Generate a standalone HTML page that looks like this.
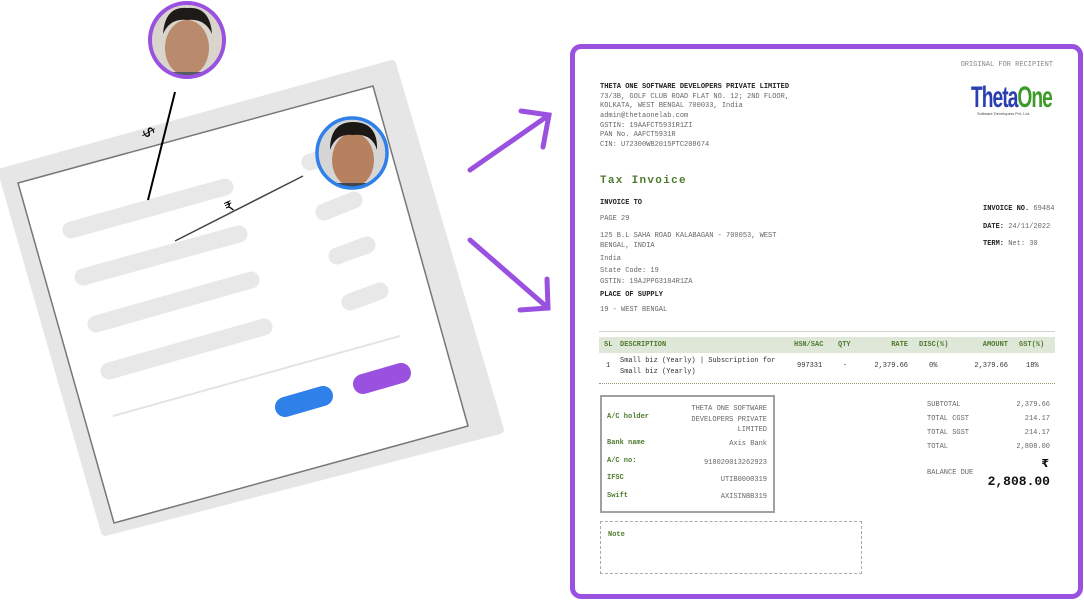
<!DOCTYPE html>
<html><head><meta charset="utf-8"><style>
*{margin:0;padding:0;box-sizing:border-box}
body{width:1084px;height:600px;background:#fff;position:relative;overflow:hidden;font-family:"Liberation Mono",monospace;color:#555}
.t{position:absolute;font-size:7px;line-height:9px;white-space:nowrap;color:#666}
.b{font-weight:bold;color:#222}
.g{color:#4f7a2e;font-weight:bold}
.r{text-align:right}
</style></head><body>
<svg width="560" height="600" style="position:absolute;left:0;top:0">
<defs>
<clipPath id="c1"><circle cx="187" cy="40" r="36"/></clipPath>
<clipPath id="c2"><circle cx="352" cy="153" r="34"/></clipPath>
</defs>
<polygon points="2,172 392,64 500,430 105,532" fill="#e6e6e6" stroke="#e6e6e6" stroke-width="8" stroke-linejoin="round"/>
<polygon points="18,183 373,86 468,426 114,523" fill="#fff" stroke="#777" stroke-width="1.5"/>
<g stroke="#e8e8e8" stroke-width="17" stroke-linecap="round">
<line x1="71" y1="230" x2="225" y2="187"/>
<line x1="83" y1="277" x2="239" y2="234"/>
<line x1="96" y1="324" x2="251" y2="280"/>
<line x1="109" y1="371" x2="264" y2="327"/>
<line x1="310" y1="162" x2="320" y2="159"/>
<line x1="324" y1="212" x2="354" y2="200"/>
<line x1="337" y1="256" x2="367" y2="245"/>
<line x1="350" y1="302" x2="380" y2="291"/>
</g>
<line x1="113" y1="416" x2="400" y2="336" stroke="#e4e4e4" stroke-width="2"/>
<line x1="285" y1="407" x2="323" y2="396" stroke="#2f80e8" stroke-width="20" stroke-linecap="round"/>
<line x1="363" y1="384" x2="401" y2="373" stroke="#9b51e0" stroke-width="20" stroke-linecap="round"/>
<line x1="175" y1="92" x2="148" y2="200" stroke="#000" stroke-width="2"/>
<text x="142" y="142" font-size="16" font-family="DejaVu Sans" transform="rotate(60 152 136)">$</text>
<line x1="175" y1="241" x2="303" y2="176" stroke="#444" stroke-width="1.5"/>
<text x="224" y="210" font-size="14" font-family="DejaVu Sans" transform="rotate(-25 232 204)">₹</text>
<g clip-path="url(#c1)"><rect x="140" y="0" width="100" height="80" fill="#d9d4cc"/><ellipse cx="187" cy="48" rx="22" ry="28" fill="#b98a6c"/><path d="M163 34 Q165 6 187 8 Q210 6 212 34 Q205 18 187 20 Q170 18 163 34Z" fill="#1e1a18"/><rect x="160" y="72" width="55" height="10" fill="#555c66"/></g>
<circle cx="187" cy="40" r="37" fill="none" stroke="#9b51e0" stroke-width="4"/>
<g clip-path="url(#c2)"><rect x="310" y="115" width="90" height="80" fill="#d6d6d6"/><ellipse cx="353" cy="160" rx="21" ry="27" fill="#b7805e"/><path d="M330 150 Q330 122 353 122 Q378 122 377 150 Q372 133 353 135 Q336 133 330 150Z" fill="#1c1815"/><rect x="325" y="183" width="56" height="10" fill="#3f4650"/></g>
<circle cx="352" cy="153" r="35" fill="none" stroke="#2f80e8" stroke-width="3.5"/>
<g stroke="#9b51e0" stroke-width="5" stroke-linecap="round" fill="none">
<line x1="470" y1="170" x2="549" y2="115"/><polyline points="521,111 549,115 543,147"/>
<line x1="470" y1="240" x2="548" y2="308"/><polyline points="547,279 548,308 520,310"/>
</g>
</svg>
<div style="position:absolute;left:570px;top:44px;width:513px;height:555px;border:5px solid #9b51e0;border-radius:11px"></div>
<div class="t r" style="right:31px;top:61px;color:#888">ORIGINAL FOR RECIPIENT</div>
<div class="t b" style="left:600px;top:83px">THETA ONE SOFTWARE DEVELOPERS PRIVATE LIMITED</div>
<div class="t" style="left:600px;top:92.5px;line-height:9.7px">73/3B, GOLF CLUB ROAD FLAT NO. 12; 2ND FLOOR,<br>KOLKATA, WEST BENGAL 700033, India<br>admin@thetaonelab.com<br>GSTIN: 19AAFCT5931R1ZI<br>PAN No. AAFCT5931R<br>CIN: U72300WB2015PTC208674</div>
<div style="position:absolute;left:971px;top:82px;font-family:'Liberation Sans',sans-serif;font-weight:bold;font-size:30px;letter-spacing:-1.5px;transform:scaleX(0.64);transform-origin:left top;line-height:32px"><span style="color:#2a3fae">Theta</span><span style="color:#3f9a2a">One</span></div>
<div style="position:absolute;left:977px;top:111px;font-family:'Liberation Sans',sans-serif;font-size:4px;color:#444">Software Developers Pvt. Ltd.</div>
<div style="position:absolute;left:600px;top:175px;font-size:11px;font-weight:bold;color:#4f7a2e;letter-spacing:1.3px">Tax Invoice</div>
<div class="t b" style="left:600px;top:199px">INVOICE TO</div>
<div class="t" style="left:600px;top:215px">PAGE 29</div>
<div class="t" style="left:600px;top:231px;line-height:10px">125 B.L SAHA ROAD KALABAGAN - 700053, WEST<br>BENGAL, INDIA</div>
<div class="t" style="left:600px;top:255px">India</div>
<div class="t" style="left:600px;top:267px">State Code: 19</div>
<div class="t" style="left:600px;top:278px">GSTIN: 19AJPPG3184R1ZA</div>
<div class="t b" style="left:600px;top:291px">PLACE OF SUPPLY</div>
<div class="t" style="left:600px;top:306px">19 - WEST BENGAL</div>
<div class="t" style="left:983px;top:205px"><b style="color:#222">INVOICE NO.</b> 69484</div>
<div class="t" style="left:983px;top:223px"><b style="color:#222">DATE:</b> 24/11/2022</div>
<div class="t" style="left:983px;top:240px"><b style="color:#222">TERM:</b> Net: 30</div>
<div style="position:absolute;left:599px;top:331px;width:456px;height:1px;background:#cfd8c8"></div>
<div style="position:absolute;left:599px;top:337px;width:456px;height:16px;background:#dfe8d8"></div>
<div class="t g" style="left:604px;top:341px">SL</div>
<div class="t g" style="left:620px;top:341px">DESCRIPTION</div>
<div class="t g" style="left:794px;top:341px">HSN/SAC</div>
<div class="t g" style="left:838px;top:341px">QTY</div>
<div class="t g r" style="right:176px;top:341px">RATE</div>
<div class="t g" style="left:919px;top:341px">DISC(%)</div>
<div class="t g r" style="right:76px;top:341px">AMOUNT</div>
<div class="t g" style="left:1019px;top:341px">GST(%)</div>
<div class="t" style="left:606px;top:362px;color:#333">1</div>
<div class="t" style="left:620px;top:356px;line-height:10.5px;color:#333">Small biz (Yearly) | Subscription for<br>Small biz (Yearly)</div>
<div class="t" style="left:797px;top:362px;color:#333">997331</div>
<div class="t" style="left:843px;top:362px;color:#333">-</div>
<div class="t r" style="right:176px;top:362px;color:#333">2,379.66</div>
<div class="t" style="left:929px;top:362px;color:#333">0%</div>
<div class="t r" style="right:76px;top:362px;color:#333">2,379.66</div>
<div class="t" style="left:1026px;top:362px;color:#333">18%</div>
<div style="position:absolute;left:599px;top:383px;width:456px;border-top:1px dotted #8a9a7a"></div>
<div style="position:absolute;left:600px;top:395px;width:175px;height:118px;border:2px solid #a0a0a0"></div>
<div class="t g" style="left:607px;top:413px">A/C holder</div>
<div class="t r" style="right:317px;top:404px;line-height:10.5px">THETA ONE SOFTWARE<br>DEVELOPERS PRIVATE<br>LIMITED</div>
<div class="t g" style="left:607px;top:439px">Bank name</div>
<div class="t r" style="right:317px;top:440px">Axis Bank</div>
<div class="t g" style="left:607px;top:457px">A/C no:</div>
<div class="t r" style="right:317px;top:459px">918020013262923</div>
<div class="t g" style="left:607px;top:474px">IFSC</div>
<div class="t r" style="right:317px;top:476px">UTIB0000319</div>
<div class="t g" style="left:607px;top:492px">Swift</div>
<div class="t r" style="right:317px;top:493px">AXISINBB319</div>
<div style="position:absolute;left:600px;top:521px;width:262px;height:53px;border:1px dashed #aaa"></div>
<div class="t g" style="left:608px;top:531px">Note</div>
<div class="t" style="left:927px;top:401px">SUBTOTAL</div><div class="t r" style="right:34px;top:401px">2,379.66</div>
<div class="t" style="left:927px;top:415px">TOTAL CGST</div><div class="t r" style="right:34px;top:415px">214.17</div>
<div class="t" style="left:927px;top:429px">TOTAL SGST</div><div class="t r" style="right:34px;top:429px">214.17</div>
<div class="t" style="left:927px;top:443px">TOTAL</div><div class="t r" style="right:34px;top:443px">2,808.00</div>
<div style="position:absolute;right:35px;top:457px;font-size:11px;font-weight:bold;color:#111;font-family:'DejaVu Sans',sans-serif">₹</div>
<div class="t" style="left:927px;top:469px">BALANCE DUE</div>
<div style="position:absolute;right:34px;top:474px;font-size:13px;font-weight:bold;color:#111">2,808.00</div>
</body></html>
